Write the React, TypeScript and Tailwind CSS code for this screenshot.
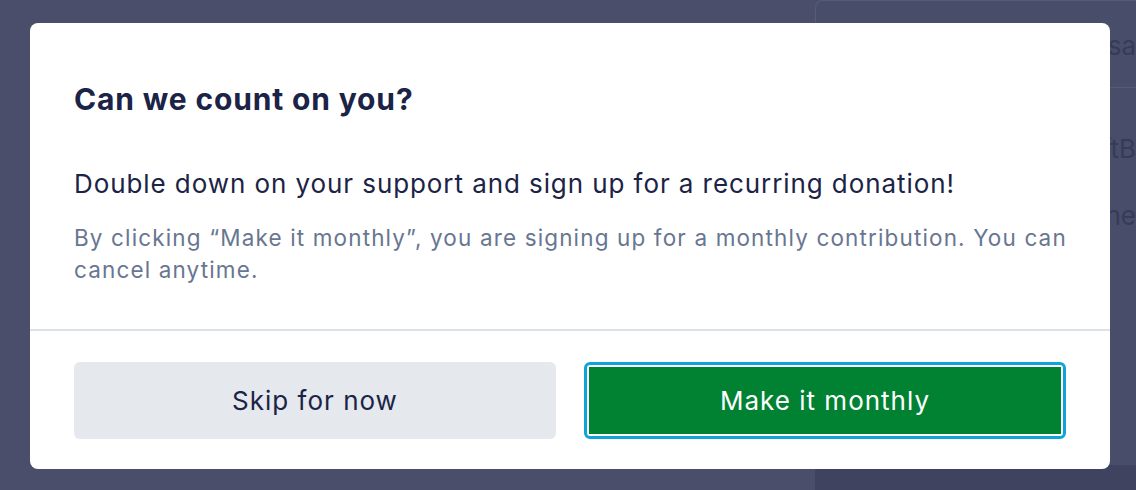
import React from 'react';

const font = { fontFamily: 'Inter, "Noto Sans", sans-serif' };

const Backdrop: React.FC = () => (
  <div className="absolute inset-0 flex bg-[#4a4e6b]">
    <div className="flex-1" />
    <div className="flex w-[321px] flex-col">
      <div className="h-[465px] overflow-hidden rounded-tl-lg border-l border-t border-[#565b77] bg-[#484d6a]">
        <div className="flex h-[87px] items-center justify-end border-b border-[#555a75] pt-[2px] text-[26px] whitespace-nowrap text-[#363b58]">
          Visa
        </div>
        <div className="flex h-[100px] items-end justify-end pb-[20px] text-[26px] whitespace-nowrap text-[#363b58]">
          GiftB
        </div>
        <div className="flex justify-end pt-[8px] text-[26px] whitespace-nowrap text-[#363b58]">
          Phone
        </div>
      </div>
      <div className="flex-1 bg-[#3f4360]" />
    </div>
  </div>
);

export default function App() {
  return (
    <div className="relative h-[490px] w-[1136px] overflow-hidden" style={font}>
      <Backdrop />
      <div className="relative pl-[30px] pt-[23px]">
        <div className="w-[1080px] rounded-lg bg-white">
          <div className="px-[44px] pt-[58px] pb-[43px]">
            <h2 className="text-[30px] leading-[36px] font-bold tracking-[0.85px] text-[#1b2346]">
              Can we count on you?
            </h2>
            <p className="mt-[51px] text-[26px] leading-[32px] tracking-[0.92px] text-[#1b2346]">
              Double down on your support and sign up for a recurring donation!
            </p>
            <p className="mt-[22px] text-[22.5px] leading-[32px] tracking-[1.14px] text-[#687691]">
              <span className="block whitespace-nowrap">
                By clicking “Make it monthly”, you are signing up for a monthly contribution. You can
              </span>
              <span className="block whitespace-nowrap">cancel anytime.</span>
            </p>
          </div>
          <div className="h-[2px] bg-[#dde1e8]" />
          <div className="grid grid-cols-2 gap-[28px] px-[44px] pt-[31px] pb-[30px]">
            <button className="h-[77px] rounded-md bg-[#e5e8ed] text-[26px] tracking-[1px] text-[#1b2346]">
              Skip for now
            </button>
            <button className="h-[77px] rounded-md border-[3px] border-[#0ba5dc] bg-white p-[2px]">
              <span className="flex h-full w-full items-center justify-center bg-[#008232] text-[26px] tracking-[1px] text-white">
                Make it monthly
              </span>
            </button>
          </div>
        </div>
      </div>
    </div>
  );
}
